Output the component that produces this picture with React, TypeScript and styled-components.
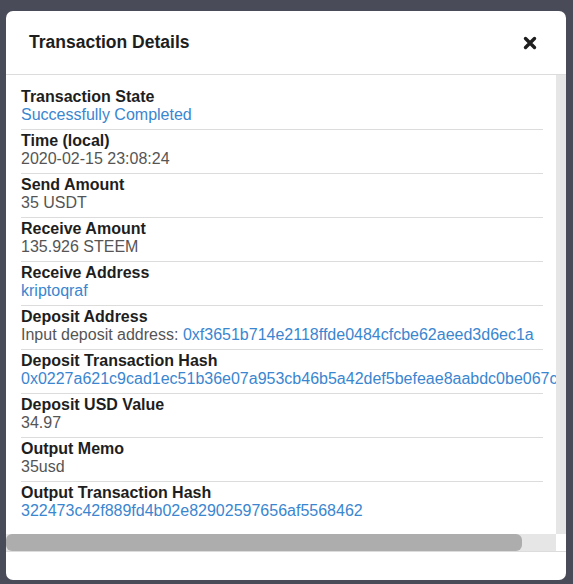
import React from "react";
import styled, { createGlobalStyle } from "styled-components";

type Detail = {
  label: string;
  value: string;
  prefix?: string;
  link?: boolean;
};

const details: Detail[] = [
  { label: "Transaction State", value: "Successfully Completed", link: true },
  { label: "Time (local)", value: "2020-02-15 23:08:24" },
  { label: "Send Amount", value: "35 USDT" },
  { label: "Receive Amount", value: "135.926 STEEM" },
  { label: "Receive Address", value: "kriptoqraf", link: true },
  {
    label: "Deposit Address",
    prefix: "Input deposit address: ",
    value: "0xf3651b714e2118ffde0484cfcbe62aeed3d6ec1a",
    link: true,
  },
  {
    label: "Deposit Transaction Hash",
    value: "0x0227a621c9cad1ec51b36e07a953cb46b5a42def5befeae8aabdc0be067c9e",
    link: true,
  },
  { label: "Deposit USD Value", value: "34.97" },
  { label: "Output Memo", value: "35usd" },
  {
    label: "Output Transaction Hash",
    value: "322473c42f889fd4b02e82902597656af5568462",
    link: true,
  },
];

// share of the horizontal track taken by the thumb (visible / full width)
const thumbRatio = 516 / 550;

const GlobalStyle = createGlobalStyle`
  html, body {
    margin: 0;
    padding: 0;
    background: #4a4b58;
  }
  body {
    font-family: "Liberation Sans", Arial, sans-serif;
  }
`;

const Backdrop = styled.div`
  width: 573px;
  height: 584px;
  padding: 11px 7px 4px 6px;
  box-sizing: border-box;
  background: #4a4b58;
`;

const Modal = styled.div`
  display: flex;
  flex-direction: column;
  width: 560px;
  height: 569px;
  background: #fff;
  border-radius: 7px;
  overflow: hidden;
`;

const Header = styled.div`
  display: flex;
  align-items: center;
  justify-content: space-between;
  height: 63px;
  padding: 0 29px 0 23px;
  border-bottom: 1px solid #dcdcdc;
  flex-shrink: 0;
`;

const Title = styled.h5`
  margin: 0;
  font-size: 17.5px;
  font-weight: 700;
  color: #1e1e1e;
`;

const CloseButton = styled.button`
  display: flex;
  padding: 0;
  border: 0;
  background: none;
  cursor: pointer;
`;

const Body = styled.div`
  display: flex;
  flex-direction: column;
  flex: 1;
  min-height: 0;
`;

const ScrollArea = styled.div`
  display: flex;
  flex: 1;
  min-height: 0;
`;

const Content = styled.div`
  flex: 1;
  min-width: 0;
  overflow: hidden;
  padding: 11px 13px 0 15px;
`;

const VTrack = styled.div`
  width: 10px;
  flex-shrink: 0;
  background: #e6e6e6;
`;

const HBar = styled.div`
  display: flex;
  height: 17px;
  flex-shrink: 0;
`;

const HTrack = styled.div`
  flex: 1;
  background: #e6e6e6;
`;

const Thumb = styled.div`
  height: 100%;
  background: #adadad;
  border-radius: 6px;
`;

const Corner = styled.div`
  width: 10px;
  background: #fff;
`;

const Row = styled.div`
  padding: 2px 0 5px;
  border-bottom: 1px solid #dcdcdc;
  font-size: 16px;
  line-height: 18px;

  &:last-child {
    border-bottom: 0;
  }
`;

const Label = styled.div`
  font-weight: 700;
  color: #1e1e1e;
  white-space: nowrap;
`;

const Value = styled.div<{ $link?: boolean }>`
  color: ${({ $link }) => ($link ? "#3a86d0" : "#555")};
  white-space: nowrap;
`;

const Anchor = styled.span`
  color: #3a86d0;
`;

const Footer = styled.div`
  height: 28px;
  border-top: 1px solid #dcdcdc;
  flex-shrink: 0;
`;

function CloseIcon() {
  return (
    <svg width="14" height="14" viewBox="0 0 14 14">
      <path
        d="M2.5 2.5 L11.5 11.5 M11.5 2.5 L2.5 11.5"
        stroke="#1e1e1e"
        strokeWidth="3.4"
        strokeLinecap="round"
      />
    </svg>
  );
}

export default function App() {
  return (
    <>
      <GlobalStyle />
      <Backdrop>
        <Modal>
          <Header>
            <Title>Transaction Details</Title>
            <CloseButton aria-label="close">
              <CloseIcon />
            </CloseButton>
          </Header>
          <Body>
            <ScrollArea>
              <Content>
                {details.map((item) => (
                  <Row key={item.label}>
                    <Label>{item.label}</Label>
                    {item.prefix ? (
                      <Value>
                        {item.prefix}
                        <Anchor>{item.value}</Anchor>
                      </Value>
                    ) : (
                      <Value $link={item.link}>{item.value}</Value>
                    )}
                  </Row>
                ))}
              </Content>
              <VTrack />
            </ScrollArea>
            <HBar>
              <HTrack>
                <Thumb style={{ width: `${thumbRatio * 100}%` }} />
              </HTrack>
              <Corner />
            </HBar>
          </Body>
          <Footer />
        </Modal>
      </Backdrop>
    </>
  );
}
